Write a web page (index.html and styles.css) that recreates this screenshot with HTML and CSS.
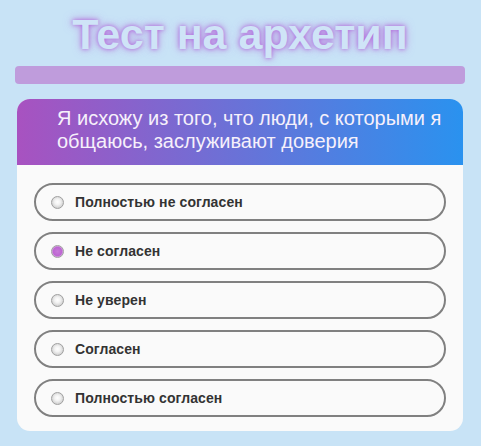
FILE: index.html
```html
<!DOCTYPE html>
<html lang="ru">
<head>
<meta charset="utf-8">
<title>Тест на архетип</title>
<link rel="stylesheet" href="styles.css">
</head>
<body>
<main class="page">
  <h1 class="title">Тест на архетип</h1>
  <div class="progress"></div>
  <section class="card">
    <div class="card-head">Я исхожу из того, что люди, с которыми я общаюсь, заслуживают доверия</div>
    <form class="options">
      <label class="option"><input type="radio" name="q"><span>Полностью не согласен</span></label>
      <label class="option"><input type="radio" name="q" checked><span>Не согласен</span></label>
      <label class="option"><input type="radio" name="q"><span>Не уверен</span></label>
      <label class="option"><input type="radio" name="q"><span>Согласен</span></label>
      <label class="option"><input type="radio" name="q"><span>Полностью согласен</span></label>
    </form>
  </section>
</main>
</body>
</html>
```
FILE: styles.css
```css
html, body {
  margin: 0;
  padding: 0;
  background: #c8e3f6;
  font-family: "Liberation Sans", Arial, sans-serif;
}
.page {
  padding: 11px 16px 0 15px;
}
.title {
  margin: 0;
  font-size: 43px;
  line-height: 46px;
  font-weight: bold;
  text-align: center;
  color: #cfe4f7;
  text-shadow: 0 0 4px rgba(175, 90, 215, 0.9), 0 0 10px rgba(175, 90, 215, 0.6);
}
.progress {
  margin-top: 9px;
  height: 18px;
  border-radius: 4px;
  background: #bf9cdc;
}
.card {
  margin: 15px 2px 0;
  background: #fafafa;
  border-radius: 13px;
  overflow: hidden;
}
.card-head {
  padding: 8px 18px 12px 40px;
  background: linear-gradient(to right, #a852c0, #2a92ef);
  color: #f6f0fb;
  font-size: 20px;
  line-height: 23px;
}
.options {
  display: flex;
  flex-direction: column;
  gap: 11px;
  padding: 18px 17px 14px;
}
.option {
  display: flex;
  align-items: center;
  height: 34px;
  border: 2px solid #808080;
  border-radius: 19px;
  padding: 0 14px;
  gap: 11px;
  font-size: 14px;
  font-weight: bold;
  letter-spacing: 0.1px;
  color: #333;
}
.option input {
  appearance: none;
  -webkit-appearance: none;
  margin: 0 0 0 1px;
  width: 13px;
  height: 13px;
  border-radius: 50%;
  border: 1px solid #a0a0a0;
  background: radial-gradient(circle at 50% 45%, #ffffff 0, #f2f2f2 35%, #d0d0d0 75%, #b8b8b8 100%);
}
.option input:checked {
  background: radial-gradient(circle, #c77ad8 0, #bd66d2 55%, #d8b8e0 75%, #c8c8c8 100%);
}
```
